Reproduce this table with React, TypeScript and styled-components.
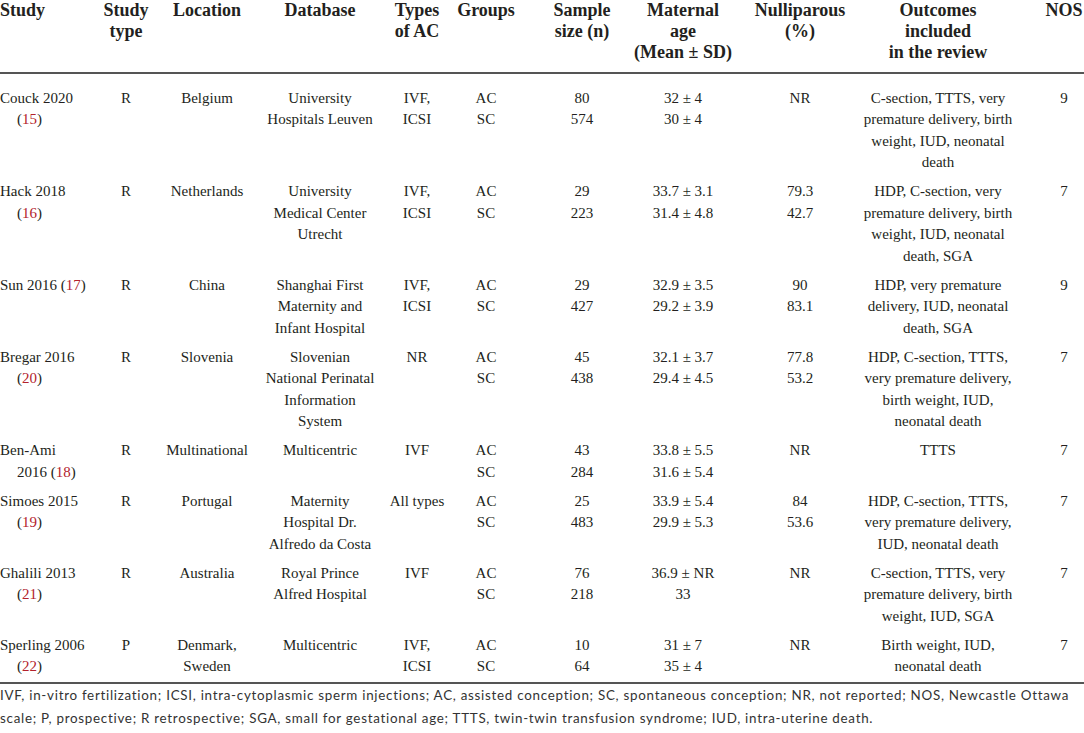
import React from "react";
import styled, { createGlobalStyle } from "styled-components";

const Global = createGlobalStyle`
  html, body { margin: 0; padding: 0; background: #fff; overflow: hidden; }
  body { font-family: "Liberation Serif", "Times New Roman", serif; color: #231f20; }
`;

const COLS = "92px 68px 94px 132px 62px 76px 116px 86px 148px 128px 124px";

const Page = styled.div`
  width: 1126px;
  display: flex;
  flex-direction: column;
`;

const HeadRow = styled.div`
  display: grid;
  grid-template-columns: ${COLS};
  padding: 0 0 9px;
  border-bottom: 2px solid #555;
  font-family: "Liberation Serif", "DejaVu Serif", serif;
  font-weight: 700;
  font-size: 18px;
  line-height: 21px;
`;

const Body = styled.div`
  display: flex;
  flex-direction: column;
  padding: 10px 0 0;
  border-bottom: 2px solid #555;
`;

const Row = styled.div`
  display: grid;
  grid-template-columns: ${COLS};
  padding: 3.75px 0;
  font-family: "Liberation Serif", serif;
  font-size: 15px;
  line-height: 21.5px;
`;

const Cell = styled.div<{ $left?: boolean }>`
  display: flex;
  justify-content: ${(p) => (p.$left ? "flex-start" : "center")};
  align-items: flex-start;
  min-width: 0;
`;

const Lines = styled.div<{ $hang?: boolean }>`
  white-space: nowrap;
  text-align: ${(p) => (p.$hang ? "left" : "center")};
  padding-left: ${(p) => (p.$hang ? "17px" : "0")};
  text-indent: ${(p) => (p.$hang ? "-17px" : "0")};
`;

const Ref = styled.span`
  color: #b3222c;
`;

const Footnote = styled.p`
  margin: 0;
  width: 1084px;
  padding-top: 0;
  font-family: Lato, "Open Sans", sans-serif;
  font-size: 13.4px;
  letter-spacing: 0.72px;
  line-height: 23.5px;
  color: #333;
`;

type RowData = {
  study: React.ReactNode;
  type: string;
  location: string[];
  database: string[];
  types: string[];
  groups: string[];
  sample: string[];
  age: string[];
  nulli: string[];
  outcomes: string[];
  nos: string;
};

const rows: RowData[] = [
  {
    study: <>Couck 2020<br />(<Ref>15</Ref>)</>,
    type: "R",
    location: ["Belgium"],
    database: ["University", "Hospitals Leuven"],
    types: ["IVF,", "ICSI"],
    groups: ["AC", "SC"],
    sample: ["80", "574"],
    age: ["32 ± 4", "30 ± 4"],
    nulli: ["NR"],
    outcomes: ["C-section, TTTS, very", "premature delivery, birth", "weight, IUD, neonatal", "death"],
    nos: "9",
  },
  {
    study: <>Hack 2018<br />(<Ref>16</Ref>)</>,
    type: "R",
    location: ["Netherlands"],
    database: ["University", "Medical Center", "Utrecht"],
    types: ["IVF,", "ICSI"],
    groups: ["AC", "SC"],
    sample: ["29", "223"],
    age: ["33.7 ± 3.1", "31.4 ± 4.8"],
    nulli: ["79.3", "42.7"],
    outcomes: ["HDP, C-section, very", "premature delivery, birth", "weight, IUD, neonatal", "death, SGA"],
    nos: "7",
  },
  {
    study: <>Sun 2016 (<Ref>17</Ref>)</>,
    type: "R",
    location: ["China"],
    database: ["Shanghai First", "Maternity and", "Infant Hospital"],
    types: ["IVF,", "ICSI"],
    groups: ["AC", "SC"],
    sample: ["29", "427"],
    age: ["32.9 ± 3.5", "29.2 ± 3.9"],
    nulli: ["90", "83.1"],
    outcomes: ["HDP, very premature", "delivery, IUD, neonatal", "death, SGA"],
    nos: "9",
  },
  {
    study: <>Bregar 2016<br />(<Ref>20</Ref>)</>,
    type: "R",
    location: ["Slovenia"],
    database: ["Slovenian", "National Perinatal", "Information", "System"],
    types: ["NR"],
    groups: ["AC", "SC"],
    sample: ["45", "438"],
    age: ["32.1 ± 3.7", "29.4 ± 4.5"],
    nulli: ["77.8", "53.2"],
    outcomes: ["HDP, C-section, TTTS,", "very premature delivery,", "birth weight, IUD,", "neonatal death"],
    nos: "7",
  },
  {
    study: <>Ben-Ami<br />2016 (<Ref>18</Ref>)</>,
    type: "R",
    location: ["Multinational"],
    database: ["Multicentric"],
    types: ["IVF"],
    groups: ["AC", "SC"],
    sample: ["43", "284"],
    age: ["33.8 ± 5.5", "31.6 ± 5.4"],
    nulli: ["NR"],
    outcomes: ["TTTS"],
    nos: "7",
  },
  {
    study: <>Simoes 2015<br />(<Ref>19</Ref>)</>,
    type: "R",
    location: ["Portugal"],
    database: ["Maternity", "Hospital Dr.", "Alfredo da Costa"],
    types: ["All types"],
    groups: ["AC", "SC"],
    sample: ["25", "483"],
    age: ["33.9 ± 5.4", "29.9 ± 5.3"],
    nulli: ["84", "53.6"],
    outcomes: ["HDP, C-section, TTTS,", "very premature delivery,", "IUD, neonatal death"],
    nos: "7",
  },
  {
    study: <>Ghalili 2013<br />(<Ref>21</Ref>)</>,
    type: "R",
    location: ["Australia"],
    database: ["Royal Prince", "Alfred Hospital"],
    types: ["IVF"],
    groups: ["AC", "SC"],
    sample: ["76", "218"],
    age: ["36.9 ± NR", "33"],
    nulli: ["NR"],
    outcomes: ["C-section, TTTS, very", "premature delivery, birth", "weight, IUD, SGA"],
    nos: "7",
  },
  {
    study: <>Sperling 2006<br />(<Ref>22</Ref>)</>,
    type: "P",
    location: ["Denmark,", "Sweden"],
    database: ["Multicentric"],
    types: ["IVF,", "ICSI"],
    groups: ["AC", "SC"],
    sample: ["10", "64"],
    age: ["31 ± 7", "35 ± 4"],
    nulli: ["NR"],
    outcomes: ["Birth weight, IUD,", "neonatal death"],
    nos: "7",
  },
];

const Multi = ({ lines }: { lines: string[] }) => (
  <Cell>
    <Lines>
      {lines.map((l, i) => (
        <React.Fragment key={i}>
          {i > 0 && <br />}
          {l}
        </React.Fragment>
      ))}
    </Lines>
  </Cell>
);

const headers: string[][] = [
  ["Study", "type"],
  ["Location"],
  ["Database"],
  ["Types", "of AC"],
  ["Groups"],
  ["Sample", "size (n)"],
  ["Maternal", "age", "(Mean ± SD)"],
  ["Nulliparous", "(%)"],
  ["Outcomes", "included", "in the review"],
  ["NOS"],
];

export default function App() {
  return (
    <Page>
      <Global />
      <HeadRow>
        <Cell $left>
          <Lines $hang>Study</Lines>
        </Cell>
        {headers.map((h, i) => (
          <Multi key={i} lines={h} />
        ))}
      </HeadRow>
      <Body>
        {rows.map((r, i) => (
          <Row key={i}>
            <Cell $left>
              <Lines $hang>{r.study}</Lines>
            </Cell>
            <Multi lines={[r.type]} />
            <Multi lines={r.location} />
            <Multi lines={r.database} />
            <Multi lines={r.types} />
            <Multi lines={r.groups} />
            <Multi lines={r.sample} />
            <Multi lines={r.age} />
            <Multi lines={r.nulli} />
            <Multi lines={r.outcomes} />
            <Multi lines={[r.nos]} />
          </Row>
        ))}
      </Body>
      <Footnote>
        IVF, in-vitro fertilization; ICSI, intra-cytoplasmic sperm injections; AC, assisted conception; SC, spontaneous conception; NR, not reported; NOS, Newcastle Ottawa
        <br />
        scale; P, prospective; R retrospective; SGA, small for gestational age; TTTS, twin-twin transfusion syndrome; IUD, intra-uterine death.
      </Footnote>
    </Page>
  );
}
